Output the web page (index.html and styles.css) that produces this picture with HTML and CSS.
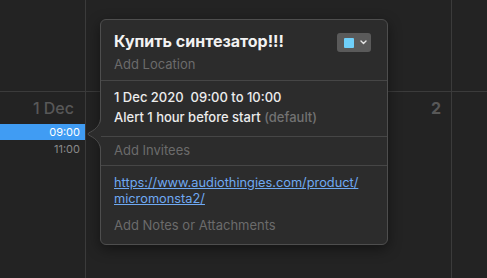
FILE: index.html
```html
<!DOCTYPE html>
<html lang="en">
<head>
    <meta charset="UTF-8">
    <meta name="viewport" content="width=device-width, initial-scale=1.0">
    <title>Calendar event</title>
    <link rel="stylesheet" href="styles.css">
</head>
<body>
    <div class="cal">
        <div class="cell allday"></div>
        <div class="cell allday"></div>
        <div class="cell allday last"></div>
        <div class="cell day">
            <div class="day-label">1 Dec</div>
            <div class="event">09:00</div>
            <div class="event-end">11:00</div>
        </div>
        <div class="cell day">
            <div class="day-label bold">2</div>
        </div>
        <div class="cell day last"></div>
    </div>

    <div class="popover">
        <svg class="arrow" width="14" height="30" viewBox="0 0 14 30">
            <path d="M14 0 C13 8 8 11 1.5 14 Q0.5 15 1.5 16 C8 19 13 22 14 30 Z" fill="#2c2c2c"/>
            <path d="M13.5 0 C12.5 8 7.5 11 1.5 14 Q0.5 15 1.5 16 C7.5 19 12.5 22 13.5 30" fill="none" stroke="#4e4e4e" stroke-width="1"/>
        </svg>
        <div class="section head">
            <div class="title-row">
                <div class="title">Купить синтезатор!!!</div>
                <button class="color-btn">
                    <span class="swatch"></span>
                    <svg width="7" height="5" viewBox="0 0 7 5"><path d="M1 1 L3.5 3.5 L6 1" fill="none" stroke="#e6e6e6" stroke-width="1.4" stroke-linecap="round" stroke-linejoin="round"/></svg>
                </button>
            </div>
            <div class="muted location">Add Location</div>
        </div>
        <div class="section when">
            <div class="line">1 Dec 2020&nbsp; 09:00 to 10:00</div>
            <div class="line">Alert 1 hour before start <span class="dim">(default)</span></div>
        </div>
        <div class="section invitees">
            <div class="muted">Add Invitees</div>
        </div>
        <div class="section notes">
            <a class="link" href="#">https://www.audiothingies.com/product/<br>micromonsta2/</a>
            <div class="muted add-notes">Add Notes or Attachments</div>
        </div>
    </div>
</body>
</html>
```

FILE: styles.css
```css
body {
    margin: 0;
    background-color: #232323;
    font-family: Inter, "Noto Sans", sans-serif;
    overflow: hidden;
    height: 278px;
}
.cal {
    display: grid;
    grid-template-columns: 86px 366px 1fr;
    grid-template-rows: 92px 186px;
}
.cell {
    border-right: 1px solid #3b3b3b;
}
.cell.last {
    border-right: none;
}
.allday {
    border-bottom: 1px solid #3b3b3b;
}
.day-label {
    text-align: right;
    padding: 6px 11px 0 0;
    font-size: 16px;
    line-height: 20px;
    font-weight: 500;
    color: #585858;
}
.day-label.bold {
    font-weight: 700;
    padding-right: 10px;
}
.event {
    margin-top: 6px;
    height: 16px;
    line-height: 16px;
    background-color: #409cf3;
    color: #fff;
    font-size: 11px;
    text-align: right;
    padding-right: 5px;
}
.event-end {
    margin-top: 2px;
    font-size: 11px;
    line-height: 14px;
    text-align: right;
    padding-right: 5px;
    color: #8a8a8a;
}
.popover {
    position: absolute;
    left: 100px;
    top: 19px;
    width: 286px;
    height: 224px;
    background-color: #2c2c2c;
    border: 1px solid #4e4e4e;
    border-radius: 6px;
    box-shadow: 0 4px 14px rgba(0, 0, 0, 0.45);
    color: #ececec;
    font-size: 13px;
}
.arrow {
    position: absolute;
    left: -14px;
    top: 99px;
}
.section {
    padding: 0 16px 0 13px;
    border-bottom: 1px solid #464646;
}
.section:last-child {
    border-bottom: none;
}
.head {
    padding-top: 11px;
    padding-bottom: 8px;
}
.title-row {
    display: flex;
    justify-content: space-between;
    align-items: flex-start;
}
.title {
    font-size: 16px;
    font-weight: 700;
    line-height: 20px;
    color: #f2f2f2;
}
.color-btn {
    margin-top: 2px;
    width: 34px;
    height: 19px;
    border: none;
    border-radius: 3px;
    background-color: #5a5a5a;
    display: flex;
    align-items: center;
    gap: 6px;
    padding: 0 0 0 7px;
}
.swatch {
    width: 10px;
    height: 10px;
    background-color: #6fd0fa;
    border-radius: 1px;
}
.muted {
    color: #6b6b6b;
    line-height: 16px;
}
.location {
    margin-top: 4px;
}
.dim {
    color: #727272;
}
.when {
    padding-top: 6px;
    padding-bottom: 9px;
    font-weight: 500;
}
.when .line {
    line-height: 20px;
}
.invitees {
    padding-top: 5px;
    padding-bottom: 7px;
}
.notes {
    padding-top: 9px;
}
.link {
    display: block;
    color: #6fa9f2;
    line-height: 16px;
    font-size: 12.8px;
    text-decoration: underline;
}
.add-notes {
    margin-top: 10px;
}
```
